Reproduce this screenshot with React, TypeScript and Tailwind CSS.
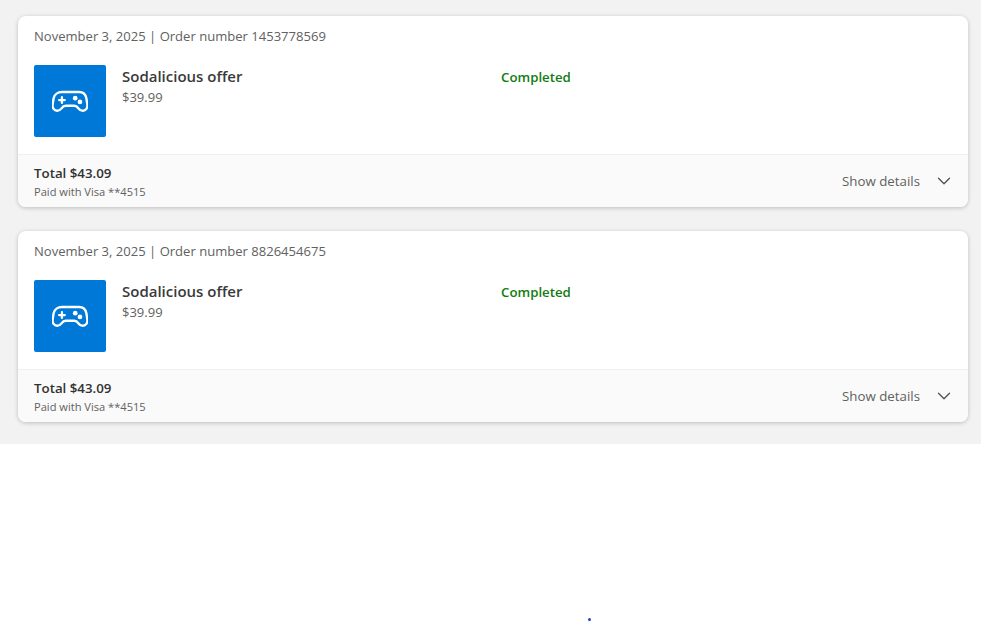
import React from 'react';
import { ChevronDown } from 'lucide-react';

interface Order {
  number: string;
}

const orders: Order[] = [{ number: '1453778569' }, { number: '8826454675' }];

const GamepadIcon = () => (
  <svg width="36" height="23" viewBox="0 0 38 24" fill="none" className="text-white">
    <path
      d="M10 2h18c4.200 0 7 2.600 7.800 6.600l1 6.400c.6 3.800-1.600 6.800-4.800 6.800-1.900 0-3.300-.9-4.500-2.500-1.300-1.800-2.400-2.800-4.500-2.800H14c-2.100 0-3.200 1-4.500 2.800C8.300 20.900 6.900 21.800 5 21.800c-3.200 0-5.400-3-4.800-6.800l1-6.400C2 4.600 5.800 2 10 2z"
      transform="translate(.5 0)"
      stroke="currentColor"
      strokeWidth="2.500"
      strokeLinejoin="round"
    />
    <path d="M10.500 7.500v6M7.500 10.500h6" stroke="currentColor" strokeWidth="2.400" strokeLinecap="round" />
    <circle cx="24.500" cy="8.500" r="2.500" fill="currentColor" />
    <circle cx="29.500" cy="12.500" r="2.500" fill="currentColor" />
  </svg>
);

const OrderCard: React.FC<Order> = ({ number }) => (
  <div className="rounded-[8px] bg-white shadow-[0_1px_4px_rgba(0,0,0,0.22)] overflow-hidden">
    {/* Header */}
    <div className="h-[49px] pl-4 pt-[11px] text-[13.05px] leading-[19px] text-[#616161]">
      November 3, 2025 | Order number {number}
    </div>

    {/* Item */}
    <div className="h-[89px] flex pl-4">
      <div className="w-[72px] h-[72px] rounded-[2px] bg-[#0078d7] flex items-center justify-center">
        <GamepadIcon />
      </div>
      <div className="w-[395px] pl-4 pt-[1px]">
        <div className="text-[15px] leading-[21px] font-semibold text-[#3a3a3a]">Sodalicious offer</div>
        <div className="text-[13px] leading-[20px] text-[#616161]">$39.99</div>
      </div>
      <div className="pt-[3px] text-[13.25px] leading-[19px] font-semibold text-[#107c10]">Completed</div>
    </div>

    {/* Footer */}
    <div className="h-[53px] flex items-center justify-between border-t border-[#f0f0f0] bg-[#fafafa] pl-4 pr-[13px]">
      <div className="pt-[2px]">
        <div className="text-[13.3px] leading-[19px] font-semibold text-[#323232]">Total $43.09</div>
        <div className="text-[11.100px] leading-[17px] text-[#616161]">Paid with Visa **4515</div>
      </div>
      <div className="flex items-center gap-[13px] text-[13.3px] leading-[19px] text-[#616161]">
        <span>Show details</span>
        <ChevronDown size={22} strokeWidth={1.4} className="text-[#505050]" />
      </div>
    </div>
  </div>
);

const App: React.FC = () => {
  return (
    <div className="relative h-[621px] bg-white font-['Open_Sans',sans-serif]">
      <div className="h-[444px] bg-[#f2f2f2] pr-[13px] py-[16px] pl-[18px] flex flex-col gap-[24px]">
        {orders.map(order => (
          <OrderCard key={order.number} number={order.number} />
        ))}
      </div>
      {/* stray loading dot */}
      <div className="absolute left-[588px] top-[618px] w-[3px] h-[3px] rounded-full bg-[#2040d0]" />
    </div>
  );
};

export default App;
